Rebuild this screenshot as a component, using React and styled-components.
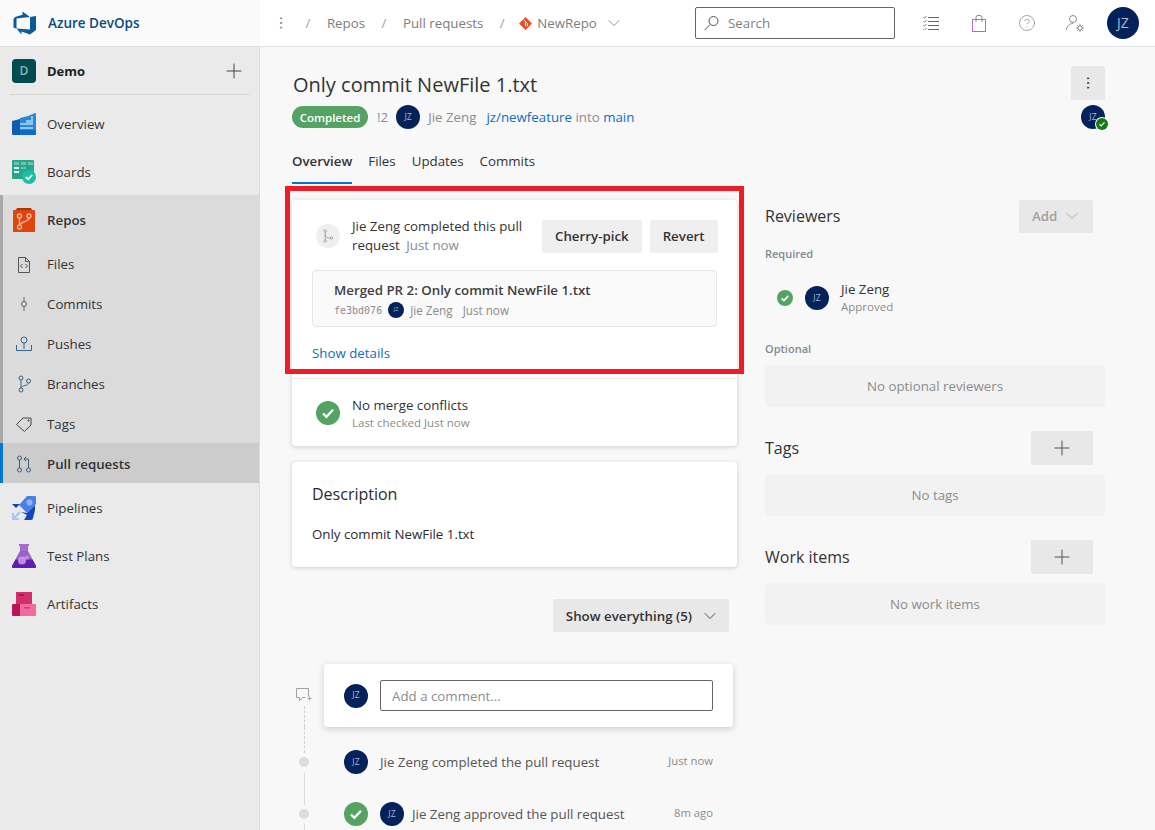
import React from "react";
import styled, { createGlobalStyle } from "styled-components";
import { Plus, ChevronDown, CircleHelp, MoreVertical } from "lucide-react";

const Global = createGlobalStyle`
  * { box-sizing: border-box; }
  html, body {
    margin: 0;
    height: 100%;
    overflow: hidden;
    background: #f8f8f8;
    font-family: "Open Sans", "Noto Sans", sans-serif;
    font-size: 13.3px;
    color: #2b2b2b;
  }
`;

const Page = styled.div`
  width: 1155px;
  height: 830px;
  display: flex;
  flex-direction: column;
  position: relative;
  overflow: hidden;
`;

/* ---------- top bar ---------- */

const TopBar = styled.header`
  flex: 0 0 47px;
  display: flex;
  align-items: center;
  background: #fff;
  border-bottom: 1px solid #e2e2e2;
`;

const Brand = styled.div`
  width: 260px;
  height: 100%;
  display: flex;
  align-items: center;
  gap: 11px;
  padding-left: 13px;
  background: #fafafa;
  font-weight: 600;
  font-size: 13.5px;
  color: #0a4a80;
`;

const Crumbs = styled.nav`
  flex: 1;
  display: flex;
  align-items: center;
  padding-left: 13px;
  color: #7d7d7d;
`;

const Slash = styled.span`
  margin: 0 ${(p) => p.$mr || 16.5}px 0 16.5px;
  color: #a0a0a0;
`;

const RepoName = styled.span`
  display: flex;
  align-items: center;
  gap: 5px;
`;

const SearchBox = styled.div`
  width: 200px;
  height: 32px;
  display: flex;
  align-items: center;
  gap: 9px;
  padding-left: 8px;
  border: 1px solid #666;
  border-radius: 2px;
  color: #808080;
`;

const TopIcons = styled.div`
  display: flex;
  align-items: center;
  gap: 28px;
  margin: 0 16px 0 26px;
  color: #8a8a8a;
`;

const TopIcon = styled.span`
  width: 20px;
  display: flex;
  justify-content: center;
`;

const Avatar = styled.span`
  flex: none;
  width: ${(p) => p.$size}px;
  height: ${(p) => p.$size}px;
  border-radius: 50%;
  background: #03225a;
  color: #a9b7cf;
  font-size: ${(p) => p.$size * 0.36}px;
  display: inline-flex;
  align-items: center;
  justify-content: center;
  line-height: 1;
  margin-left: ${(p) => p.$ml || 0}px;
  margin-right: ${(p) => p.$mr || 0}px;
`;

const BigAvatar = styled(Avatar)`
  font-size: 14px;
  margin-left: -6px;
`;

/* ---------- sidebar ---------- */

const Body = styled.div`
  flex: 1;
  display: flex;
  min-height: 0;
`;

const Sidebar = styled.aside`
  flex: 0 0 260px;
  background: #eaeaea;
  border-right: 1px solid #dcdcdc;
`;

const ProjectRow = styled.div`
  height: 47px;
  margin: 0 10px;
  padding: 0 3px 0 2px;
  display: flex;
  align-items: center;
  border-bottom: 1px solid #d2d2d2;
  font-weight: 700;
  font-size: 13px;
  color: #222;
  box-sizing: content-box;
  span.name { flex: 1; margin-left: 11px; }
`;

const ProjectBadge = styled.span`
  width: 24px;
  height: 24px;
  border-radius: 4px;
  background: #004b50;
  color: #8fb3b5;
  display: flex;
  align-items: center;
  justify-content: center;
  font-size: 12px;
  font-weight: 600;
`;

const NavList = styled.div`
  padding-top: 5px;
`;

const NavItem = styled.div`
  height: 48px;
  display: flex;
  align-items: center;
  gap: 11px;
  padding-left: 12px;
  color: #333;
`;

const RepoGroup = styled.div`
  background: #dbdbdb;
  border-left: 3px solid #a9a9a9;
  margin: -1px 0 1px;
`;

const RepoHead = styled(NavItem)`
  padding: 1px 0 0 9px;
  font-weight: 600;
`;

const SubItem = styled.div`
  height: 40px;
  display: flex;
  align-items: center;
  gap: 11px;
  padding: 1px 0 0 9px;
  color: #333;
  font-weight: ${(p) => (p.$active ? 600 : 400)};
  background: ${(p) => (p.$active ? "#cccccc" : "transparent")};
  border-left: ${(p) => (p.$active ? "3px solid #0078d4" : "none")};
  margin-left: ${(p) => (p.$active ? "-3px" : "0")};
`;

const IconSlot = styled.span`
  width: 24px;
  height: 24px;
  flex: none;
  display: flex;
  align-items: center;
  justify-content: center;
`;

/* ---------- main ---------- */

const Main = styled.main`
  flex: 1;
  padding: 19px 50px 0 32px;
  background: #f8f8f8;
  min-width: 0;
`;

const PageHead = styled.div`
  display: flex;
  justify-content: space-between;
`;

const Title = styled.h1`
  margin: 5px 0 0 1px;
  font-size: 20px;
  line-height: 28px;
  font-weight: 400;
  color: #333;
`;

const MetaRow = styled.div`
  display: flex;
  align-items: center;
  height: 24px;
  margin-top: 6px;
  color: #8c8c8c;
`;

const StatusPill = styled.span`
  height: 22px;
  width: 76px;
  border-radius: 11px;
  background: #55a362;
  color: #fff;
  font-weight: 600;
  font-size: 11.5px;
  display: flex;
  align-items: center;
  justify-content: center;
  margin-right: 9px;
`;

const BranchLink = styled.a`
  color: #106ebe;
  margin-left: ${(p) => p.$ml || 0}px;
`;

const HeadRight = styled.div`
  display: flex;
  flex-direction: column;
  align-items: flex-end;
  gap: 5px;
`;

const IconButton = styled.button`
  width: 34px;
  height: 34px;
  border: 0;
  border-radius: 2px;
  background: #e8e8e8;
  color: #444;
  display: flex;
  align-items: center;
  justify-content: center;
  padding: 0;
`;

const BadgeWrap = styled.span`
  position: relative;
  display: inline-flex;
`;

const Tick = styled.span`
  position: absolute;
  right: -4px;
  bottom: -2px;
  display: flex;
  border-radius: 50%;
  background: #fff;
  padding: 1px;
`;

const Tabs = styled.div`
  display: flex;
  gap: 16px;
  margin-top: 14px;
  height: 41px;
`;

const Tab = styled.div`
  height: 41px;
  line-height: 36px;
  color: #333;
  font-weight: ${(p) => (p.$active ? 600 : 400)};
  border-bottom: 2px solid ${(p) => (p.$active ? "#0078d4" : "transparent")};
`;

const Columns = styled.div`
  display: flex;
  gap: 28px;
  margin-top: 16px;
`;

const LeftCol = styled.div`
  width: 445px;
  flex: none;
`;

const RightCol = styled.div`
  flex: 1;
  margin-top: -1px;
`;

const Card = styled.section`
  background: #fff;
  border-radius: 4px;
  box-shadow: 0 1px 4px rgba(0, 0, 0, 0.18);
  margin-bottom: 16px;
`;

const CompletedBlock = styled.div`
  padding: 17px 20px 0;
  height: 179px;
  border-bottom: 1px solid #e8e8e8;
`;

const CompletedTop = styled.div`
  display: flex;
  align-items: center;
`;

const EventCircle = styled.span`
  width: 24px;
  height: 24px;
  margin-left: 4px;
  flex: none;
  border-radius: 50%;
  background: #efefef;
  color: #888;
  display: flex;
  align-items: center;
  justify-content: center;
`;

const CompletedText = styled.div`
  width: 190px;
  flex: none;
  margin-left: 12px;
  line-height: 19px;
  color: #333;
`;

const Muted = styled.span`
  color: #8c8c8c;
  margin-left: ${(p) => p.$ml || 0}px;
`;

const Btn = styled.button`
  height: 33px;
  flex: none;
  border: 0;
  border-radius: 2px;
  padding: 0 13px;
  background: #efefef;
  color: #333;
  font: 600 13.3px "Open Sans", sans-serif;
  white-space: nowrap;
  margin-left: ${(p) => p.$ml || 0}px;
  display: inline-flex;
  align-items: center;
`;

const CommitBox = styled.div`
  height: 57px;
  margin-top: 15px;
  padding: 10px 21px 0;
  border: 1px solid #e6e6e6;
  border-radius: 4px;
  background: #fafafa;
`;

const CommitTitle = styled.div`
  font-weight: 600;
  color: #404040;
  line-height: 18px;
`;

const CommitMeta = styled.div`
  display: flex;
  align-items: center;
  gap: 6px;
  margin-top: 3px;
  font-size: 11.7px;
  color: #8c8c8c;
`;

const Hash = styled.span`
  font: 10px "DejaVu Sans Mono", monospace;
`;

const ShowDetails = styled.a`
  display: block;
  margin-top: 16px;
  color: #106ebe;
  line-height: 20px;
`;

const StatusRow = styled.div`
  height: 67px;
  display: flex;
  align-items: center;
  padding-left: 24px;
  gap: 12px;
`;

const StatusText = styled.div`
  line-height: 18px;
  color: #333;
  padding-top: 2px;
  small {
    display: block;
    font-size: 11.5px;
    color: #8c8c8c;
  }
`;

const DescCard = styled(Card)`
  height: 105px;
  padding: 21px 20px;
  margin-bottom: 0;
  h3 {
    margin: 0;
    font-size: 16px;
    line-height: 22px;
    font-weight: 400;
  }
  p {
    margin: 19px 0 0;
    line-height: 20px;
  }
`;

const FilterRow = styled.div`
  display: flex;
  justify-content: flex-end;
  margin: 32px 8px 32px 0;
`;

const GreyBtn = styled(Btn)`
  background: #e8e8e8;
  padding-right: 9px;
  gap: 8px;
`;

const Timeline = styled.div`
  display: grid;
  grid-template-columns: 32px 1fr;
  margin-right: 4px;
`;

const Rail = styled.div`
  display: flex;
  flex-direction: column;
  align-items: center;
  padding-right: 8px;
  padding-top: ${(p) => p.$pt || 0}px;
`;

const Dot = styled.span`
  width: 10px;
  height: 10px;
  flex: none;
  border-radius: 50%;
  background: #dcdcdc;
`;

const RailLine = styled.span`
  flex: ${(p) => (p.$h ? `0 0 ${p.$h}px` : "1")};
  width: 0;
  border-left: 1px ${(p) => (p.$dashed ? "dashed #d0d0d0" : "solid #dcdcdc")};
  margin: ${(p) => p.$m || "0"};
`;

const CommentCard = styled.div`
  height: 63px;
  background: #fff;
  border-radius: 4px;
  box-shadow: 0 2px 7px rgba(0, 0, 0, 0.18);
  display: flex;
  align-items: center;
  padding: 0 20px;
  gap: 12px;
`;

const CommentInput = styled.div`
  flex: 1;
  height: 31px;
  border: 1px solid #666;
  border-radius: 2px;
  display: flex;
  align-items: center;
  padding-left: 11px;
  background: #fff;
  color: #8c8c8c;
`;

const TimelineEvent = styled.div`
  height: ${(p) => p.$h}px;
  display: flex;
  align-items: center;
  padding: ${(p) => p.$pt || 0}px 20px 0;
  gap: 12px;
  color: #555;
`;

const TimeNote = styled.span`
  margin-left: auto;
  font-size: 11.3px;
  color: #8c8c8c;
  transform: translateY(-2px);
`;

/* ---------- right column ---------- */

const SectionHead = styled.div`
  display: flex;
  align-items: center;
  justify-content: space-between;
  padding-right: 12px;
  height: 34px;
  font-size: 16px;
  color: #333;
  margin-top: ${(p) => p.$mt || 0}px;
`;

const DisabledBtn = styled(Btn)`
  width: 74px;
  background: #e8e8e8;
  color: #a0a0a0;
  padding-right: 0;
  gap: 5px;
`;

const AddBtn = styled.button`
  width: 62px;
  height: 34px;
  border: 0;
  border-radius: 2px;
  background: #e8e8e8;
  color: #555;
  display: flex;
  align-items: center;
  justify-content: center;
  padding: 0;
`;

const GroupLabel = styled.div`
  font-size: 11px;
  font-weight: 600;
  color: #7f8b93;
  line-height: 16px;
  margin-top: ${(p) => p.$mt || 0}px;
`;

const ReviewerRow = styled.div`
  height: 38px;
  margin-top: 17px;
  display: flex;
  align-items: center;
  padding-left: 12px;
`;

const ReviewerText = styled.div`
  margin-left: 12px;
  line-height: 18px;
  color: #333;
  small {
    display: block;
    font-size: 11.5px;
    color: #8c8c8c;
  }
`;

const EmptyBox = styled.div`
  height: 42px;
  margin-top: ${(p) => p.$mt || 0}px;
  border-radius: 4px;
  background: #f2f2f2;
  color: #8c8c8c;
  display: flex;
  align-items: center;
  justify-content: center;
`;

const Outline = styled.div`
  position: absolute;
  left: 285px;
  top: 186px;
  width: 459px;
  height: 188px;
  border: 5px solid #ee1c25;
  pointer-events: none;
`;

/* ---------- drawn icons ---------- */

const DevOpsLogo = () => (
  <svg width="24" height="24" viewBox="0 0 24 24">
    <path
      fill="#0a5a9c"
      d="M23 5v14l-6 4.500-8.500-3.100v3.100L3.500 17.500l13.500 1V6zM17 6L9.500 .5v3.200L2 6 .5 8v8.500l3 1.200V7.500z"
    />
  </svg>
);

const OverviewIcon = () => (
  <svg width="24" height="22" viewBox="0 0 24 22">
    <path fill="#0f5cb0" d="M0 8l8-2v16H1a1 1 0 0 1-1-1z" />
    <path fill="#2b88d8" d="M8 5l8-2 7-3a1 1 0 0 1 1 1v20a1 1 0 0 1-1 1H8z" />
    <path fill="#0f6cc4" d="M8 17h16v4a1 1 0 0 1-1 1H8z" />
    <path fill="#8cc3f0" d="M8 10h6V7h5V3h2v9H8zM8 14h13v2H8z" />
  </svg>
);

const BoardsIcon = () => (
  <svg width="24" height="24" viewBox="0 0 24 24">
    <rect y="0" width="22" height="19" rx="1" fill="#2aa58c" />
    <path fill="#7fd3bf" d="M2 2h5v3H2zM9 2h5v3H9zM16 2h5v3h-5z" opacity=".7" />
    <path fill="#e4f5f0" d="M2 7h5v2H2zM2 11h5v2H2z" />
    <path fill="#7fd3bf" d="M9 7h5v2H9z" opacity=".7" />
    <circle cx="17" cy="17" r="7" fill="#1dbfa2" />
    <path d="M13.800 17l2.300 2.300 4.100-4.300" fill="none" stroke="#fff" strokeWidth="1.800" />
  </svg>
);

const ReposIcon = () => (
  <svg width="22" height="24" viewBox="0 0 22 24">
    <path fill="#a33b10" d="M3 2l1-2h14l1 2z" />
    <path fill="#e0450f" d="M0 3a1 1 0 0 1 1-1h20a1 1 0 0 1 1 1v21H0z" />
    <g fill="none" stroke="#ffb59a" strokeWidth="1.300">
      <circle cx="6.500" cy="8" r="2" />
      <circle cx="6.500" cy="19" r="2" />
      <circle cx="16" cy="8" r="2" />
      <path d="M6.500 10v7M16 10c0 4-8 3-9 7" />
    </g>
  </svg>
);

const PipelinesIcon = () => (
  <svg width="24" height="24" viewBox="0 0 24 24">
    <path fill="#4a80e8" d="M22 0h1a1 1 0 0 1 1 1v7l-9 9-8-8 8-9z" />
    <path fill="#0f48b8" d="M9 16l6 1 8-8v5l-2 8a2 2 0 0 1-2 2h-7l3-5zM0 8h8l-4 4z" />
    <circle cx="17.500" cy="6.500" r="3" fill="#8fb6f5" />
    <path fill="none" stroke="#a8c4f6" strokeWidth="2" d="M1 17v6h6M1 23l7-7" />
  </svg>
);

const TestIcon = () => (
  <svg width="24" height="24" viewBox="0 0 24 24">
    <path fill="#a76cd0" d="M7 0h10v2h-1v6H8V2H7z" />
    <path fill="#9b5fc9" d="M8 7h8l8 15a1.500 1.500 0 0 1-1.500 2h-21A1.500 1.500 0 0 1 0 22z" />
    <path fill="#5f1faa" d="M3.500 15.500h17L24 22a1.500 1.500 0 0 1-1.500 2h-21A1.500 1.500 0 0 1 0 22z" />
    <circle cx="10" cy="16.500" r="4" fill="#c7a2e6" opacity=".85" />
    <circle cx="15" cy="13.500" r="2" fill="#c7a2e6" opacity=".7" />
  </svg>
);

const ArtifactsIcon = () => (
  <svg width="24" height="24" viewBox="0 0 24 24">
    <rect x="4" width="16" height="13" fill="#d22f6e" />
    <rect x="7" y="2" width="5" height="2" fill="#a8184e" />
    <rect y="12" width="10" height="12" rx="1" fill="#b8145a" />
    <rect x="8" y="12" width="16" height="12" rx="1" fill="#f06c9c" />
    <rect x="12" y="15" width="6" height="1.500" fill="#c93a72" />
  </svg>
);

const Stroke = ({ children, w = 20, h = 20, color = "#555" }) => (
  <svg width={w} height={h} viewBox="0 0 20 20" fill="none" stroke={color} strokeWidth="1">
    {children}
  </svg>
);

const FilesIcon = () => (
  <Stroke>
    <path d="M4.500 3.500h7l4 4v11h-11zM11.500 3.500v4h4M8.500 10L6.500 12l2 2M11.500 10l2 2-2 2" />
  </Stroke>
);
const CommitsIcon = () => (
  <Stroke color="#5c6570">
    <circle cx="10" cy="10" r="2.500" />
    <path d="M10 3v4.500M10 12.500V17" />
  </Stroke>
);
const PushesIcon = () => (
  <Stroke color="#33658f">
    <circle cx="10" cy="6" r="3" />
    <path d="M10 9v6M2.500 11v5.500h15V11" />
  </Stroke>
);
const BranchesIcon = () => (
  <Stroke color="#3f5f7f">
    <circle cx="7" cy="4" r="2" />
    <circle cx="7" cy="16" r="2" />
    <circle cx="14.500" cy="7" r="2" />
    <path d="M7 6v8M14.500 9c0 3-6.500 2-7.500 5" />
  </Stroke>
);
const TagsIcon = () => (
  <Stroke color="#444">
    <path d="M2.500 10.500L9 4h8v7l-6.500 6.500z" />
    <circle cx="14.500" cy="6.500" r=".7" />
  </Stroke>
);
const PullIcon = () => (
  <Stroke color="#3f5f7f">
    <circle cx="5.500" cy="4" r="2" />
    <circle cx="5.500" cy="16" r="2" />
    <circle cx="14.500" cy="16" r="2" />
    <path d="M5.500 6v8M14.500 14V5H10M12 3l-2 2 2 2" />
  </Stroke>
);

const GitDiamond = () => (
  <svg width="13" height="13" viewBox="0 0 14 14">
    <path fill="#e8502a" d="M7 0l7 7-7 7-7-7z" />
    <path stroke="#fff" strokeWidth="1" fill="none" d="M5 3l4 4v3M7 5v5" />
  </svg>
);

const SearchGlyph = () => (
  <svg width="15" height="16" viewBox="0 0 15 16" fill="none" stroke="#555">
    <circle cx="9.500" cy="6" r="4.500" />
    <path d="M6.300 9.300L.7 15" />
  </svg>
);

const TaskList = () => (
  <svg width="16" height="14" viewBox="0 0 16 14" fill="none" stroke="#8a8a8a">
    <path d="M5 1.500h11M5 5.500h11M5 9.500h11M5 13.500h11" stroke="#666" />
    <path d="M.3 1l1.200 1.300L3.500 0M.3 5l1.200 1.300L3.500 4M.3 9l1.200 1.300L3.500 8M.3 13l1.200 1.300L3.500 12" />
  </svg>
);

const BagGlyph = () => (
  <svg width="14" height="17" viewBox="0 0 14 17" fill="none">
    <path d="M.5 4.500h13v12H.5z" stroke="#888" />
    <path d="M.5 4.500v12M13.500 4.500v12" stroke="#b06fc0" />
    <path d="M4 7V2.500A2 2 0 0 1 6 .5h2a2 2 0 0 1 2 2V7" stroke="#888" />
  </svg>
);

const UserGear = () => (
  <Stroke w={20} h={20} color="#8a8a8a">
    <circle cx="8" cy="6" r="3.500" />
    <path d="M1.500 17c0-4 3-6.500 6.500-6.500" />
    <circle cx="15" cy="15" r="2.200" />
    <path d="M15 11v1.800M15 17.200V19M11 15h1.800M17.200 15H19M12.200 12.200l1.200 1.200M16.600 16.600l1.200 1.200M17.800 12.200l-1.200 1.200M13.400 16.600l-1.200 1.200" />
  </Stroke>
);

const CheckCircle = ({ size = 24, fill = "#55a362" }) => (
  <svg width={size} height={size} viewBox="0 0 24 24">
    <circle cx="12" cy="12" r="12" fill={fill} />
    <path d="M7 12.500l3.400 3.300L17 8.800" fill="none" stroke="#fff" strokeWidth="2.400" />
  </svg>
);

const MergeGlyph = () => (
  <Stroke w={14} h={14} color="#8a8a8a">
    <circle cx="6" cy="3" r="1.800" />
    <circle cx="6" cy="17" r="1.800" />
    <circle cx="15" cy="13" r="1.800" />
    <path d="M6 5v10M6 8c0 4 4 5 7 5" />
  </Stroke>
);

const CommentPlus = () => (
  <svg width="16" height="14" viewBox="0 0 16 14" fill="none" stroke="#a0a0a0">
    <path d="M12.500 8.500V.500H.500v9h3v3l3-3h3M11.500 10.500h4M13.500 8.500v4" />
  </svg>
);

const repoItems = [
  ["Files", FilesIcon],
  ["Commits", CommitsIcon],
  ["Pushes", PushesIcon],
  ["Branches", BranchesIcon],
  ["Tags", TagsIcon],
];

export default function App() {
  return (
    <Page>
      <Global />
      <TopBar>
        <Brand>
          <DevOpsLogo />
          Azure DevOps
        </Brand>
        <Crumbs>
          <MoreVertical size={16} strokeWidth={1.5} color="#888" />
          <Slash>/</Slash>
          Repos
          <Slash>/</Slash>
          Pull requests
          <Slash $mr={14.5}>/</Slash>
          <RepoName>
            <GitDiamond />
            NewRepo
            <ChevronDown size={20} strokeWidth={1} style={{ marginLeft: 2 }} />
          </RepoName>
        </Crumbs>
        <SearchBox>
          <SearchGlyph />
          Search
        </SearchBox>
        <TopIcons>
          <TopIcon><TaskList /></TopIcon>
          <TopIcon><BagGlyph /></TopIcon>
          <TopIcon><CircleHelp size={18} strokeWidth={1} /></TopIcon>
          <TopIcon><UserGear /></TopIcon>
          <BigAvatar $size={32}>JZ</BigAvatar>
        </TopIcons>
      </TopBar>
      <Body>
        <Sidebar>
          <ProjectRow>
            <ProjectBadge>D</ProjectBadge>
            <span className="name">Demo</span>
            <Plus size={24} strokeWidth={1} color="#444" />
          </ProjectRow>
          <NavList>
            <NavItem><IconSlot><OverviewIcon /></IconSlot>Overview</NavItem>
            <NavItem><IconSlot><BoardsIcon /></IconSlot>Boards</NavItem>
            <RepoGroup>
              <RepoHead><IconSlot><ReposIcon /></IconSlot>Repos</RepoHead>
              {repoItems.map(([label, Icon]) => (
                <SubItem key={label}>
                  <IconSlot><Icon /></IconSlot>
                  {label}
                </SubItem>
              ))}
              <SubItem $active>
                <IconSlot><PullIcon /></IconSlot>
                Pull requests
              </SubItem>
            </RepoGroup>
            <NavItem><IconSlot><PipelinesIcon /></IconSlot>Pipelines</NavItem>
            <NavItem><IconSlot><TestIcon /></IconSlot>Test Plans</NavItem>
            <NavItem><IconSlot><ArtifactsIcon /></IconSlot>Artifacts</NavItem>
          </NavList>
        </Sidebar>
        <Main>
          <PageHead>
            <div>
              <Title>Only commit NewFile 1.txt</Title>
              <MetaRow>
                <StatusPill>Completed</StatusPill>
                !2
                <Avatar $size={24} $ml={8} $mr={8}>JZ</Avatar>
                Jie Zeng
                <BranchLink $ml={10}>jz/newfeature</BranchLink>
                &nbsp;into&nbsp;
                <BranchLink>main</BranchLink>
              </MetaRow>
            </div>
            <HeadRight>
              <IconButton><MoreVertical size={16} strokeWidth={1.5} /></IconButton>
              <BadgeWrap>
                <Avatar $size={24}>JZ</Avatar>
                <Tick><CheckCircle size={12} fill="#107c10" /></Tick>
              </BadgeWrap>
            </HeadRight>
          </PageHead>
          <Tabs>
            <Tab $active>Overview</Tab>
            <Tab>Files</Tab>
            <Tab>Updates</Tab>
            <Tab>Commits</Tab>
          </Tabs>
          <Columns>
            <LeftCol>
              <Card>
                <CompletedBlock>
                  <CompletedTop>
                    <EventCircle><MergeGlyph /></EventCircle>
                    <CompletedText>
                      Jie Zeng completed this pull
                      <br />
                      request <Muted $ml={3}>Just now</Muted>
                    </CompletedText>
                    <Btn>Cherry-pick</Btn>
                    <Btn $ml={8}>Revert</Btn>
                  </CompletedTop>
                  <CommitBox>
                    <CommitTitle>Merged PR 2: Only commit NewFile 1.txt</CommitTitle>
                    <CommitMeta>
                      <Hash>fe3bd076</Hash>
                      <Avatar $size={16}>JZ</Avatar>
                      Jie Zeng
                      <Muted $ml={4}>Just now</Muted>
                    </CommitMeta>
                  </CommitBox>
                  <ShowDetails>Show details</ShowDetails>
                </CompletedBlock>
                <StatusRow>
                  <CheckCircle />
                  <StatusText>
                    No merge conflicts
                    <small>Last checked Just now</small>
                  </StatusText>
                </StatusRow>
              </Card>
              <DescCard>
                <h3>Description</h3>
                <p>Only commit NewFile 1.txt</p>
              </DescCard>
              <FilterRow>
                <GreyBtn>Show everything (5) <ChevronDown size={20} strokeWidth={1} /></GreyBtn>
              </FilterRow>
              <Timeline>
                <Rail $pt={24}>
                  <CommentPlus />
                  <RailLine $dashed $m="4px 0 0" />
                </Rail>
                <CommentCard>
                  <Avatar $size={24}>JZ</Avatar>
                  <CommentInput>Add a comment...</CommentInput>
                </CommentCard>
                <Rail>
                  <RailLine $dashed $h={26} $m="0 0 4px" />
                  <Dot />
                  <RailLine $m="5px 0 0" />
                </Rail>
                <TimelineEvent $h={60} $pt={10}>
                  <Avatar $size={24}>JZ</Avatar>
                  Jie Zeng completed the pull request
                  <TimeNote>Just now</TimeNote>
                </TimelineEvent>
                <Rail>
                  <RailLine $h={18} $m="0 0 4px" />
                  <Dot />
                  <RailLine $m="5px 0 0" />
                </Rail>
                <TimelineEvent $h={54}>
                  <CheckCircle />
                  <Avatar $size={24} $mr={-4}>JZ</Avatar>
                  Jie Zeng approved the pull request
                  <TimeNote>8m ago</TimeNote>
                </TimelineEvent>
              </Timeline>
            </LeftCol>
            <RightCol>
              <SectionHead>
                Reviewers
                <DisabledBtn>Add <ChevronDown size={20} strokeWidth={1} /></DisabledBtn>
              </SectionHead>
              <GroupLabel $mt={13}>Required</GroupLabel>
              <ReviewerRow>
                <CheckCircle size={16} />
                <Avatar $size={24} $ml={12}>JZ</Avatar>
                <ReviewerText>
                  Jie Zeng
                  <small>Approved</small>
                </ReviewerText>
              </ReviewerRow>
              <GroupLabel $mt={24}>Optional</GroupLabel>
              <EmptyBox $mt={8}>No optional reviewers</EmptyBox>
              <SectionHead $mt={24}>
                Tags
                <AddBtn><Plus size={24} strokeWidth={1} /></AddBtn>
              </SectionHead>
              <EmptyBox $mt={9}>No tags</EmptyBox>
              <SectionHead $mt={24}>
                Work items
                <AddBtn><Plus size={24} strokeWidth={1} /></AddBtn>
              </SectionHead>
              <EmptyBox $mt={9}>No work items</EmptyBox>
            </RightCol>
          </Columns>
        </Main>
      </Body>
      <Outline />
    </Page>
  );
}
